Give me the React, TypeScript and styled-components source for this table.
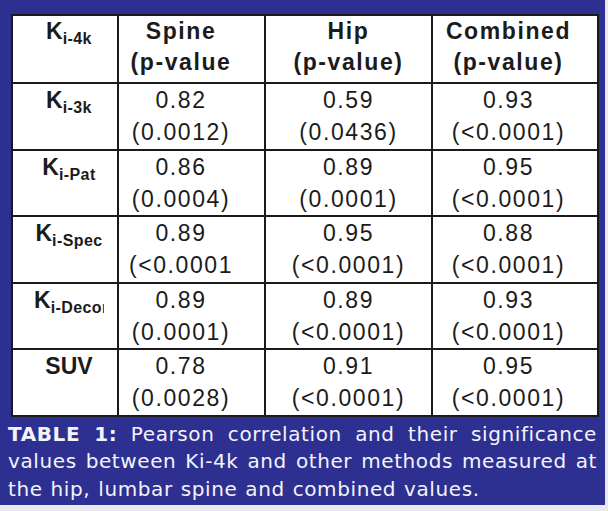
import React from "react";
import styled, { createGlobalStyle } from "styled-components";

const GlobalStyle = createGlobalStyle`
  html, body {
    margin: 0;
    padding: 0;
    background: #e9e9ef;
  }
`;

const Frame = styled.div`
  width: 605px;
  height: 505px;
  box-sizing: border-box;
  padding: 14px 8px 0 8px;
  background: #2d3091;
`;

const Table = styled.table`
  width: 586px;
  margin-left: 3px;
  border-collapse: collapse;
  table-layout: fixed;
  background: #ffffff;
  font-family: "Liberation Sans", Arial, sans-serif;
  color: #1b1b1b;
`;

const Cell = styled.td<{ $head?: boolean; $padRight?: number; $padLeft?: number }>`
  height: ${(p) => (p.$head ? 66 : 64.6)}px;
  padding: 0 ${(p) => p.$padRight || 0}px 0 ${(p) => p.$padLeft || 0}px;
  border: 2px solid #1a1a1a;
  vertical-align: top;
  text-align: center;
  font-size: 23px;
  font-weight: ${(p) => (p.$head ? 700 : 400)};
  line-height: ${(p) => (p.$head ? 31 : 32)}px;
  letter-spacing: 1.6px;
  white-space: nowrap;
  overflow: hidden;
`;

const Label = styled.div<{ $clip?: number }>`
  font-weight: 700;
  letter-spacing: 0;
  white-space: nowrap;
  overflow: hidden;
  max-width: ${(p) => (p.$clip ? `${p.$clip}px` : "none")};
  margin: 0 auto;
  text-align: ${(p) => (p.$clip ? "left" : "center")};
`;

const Sub = styled.span`
  font-size: 16px;
  letter-spacing: 0.4px;
  vertical-align: -5px;
  line-height: 0;
`;

const Caption = styled.p`
  margin: 4px 0 0 0;
  font-family: "DejaVu Sans", Verdana, sans-serif;
  font-size: 20px;
  letter-spacing: 0.6px;
  word-spacing: 1px;
  line-height: 27.5px;
  color: #f3f3fa;
  text-align: justify;
`;

const Strong = styled.b`
  font-weight: 700;
`;

type Row = {
  label: string;
  sub?: string;
  clip?: number;
  vals: [string, string][];
};

const rows: Row[] = [
  { label: "K", sub: "i-3k", vals: [["0.82", "(0.0012)"], ["0.59", "(0.0436)"], ["0.93", "(<0.0001)"]] },
  { label: "K", sub: "i-Pat", vals: [["0.86", "(0.0004)"], ["0.89", "(0.0001)"], ["0.95", "(<0.0001)"]] },
  { label: "K", sub: "i-Spec", vals: [["0.89", "(<0.0001"], ["0.95", "(<0.0001)"], ["0.88", "(<0.0001)"]] },
  { label: "K", sub: "i-Decor", clip: 70, vals: [["0.89", "(0.0001)"], ["0.89", "(<0.0001)"], ["0.93", "(<0.0001)"]] },
  { label: "SUV", vals: [["0.78", "(0.0028)"], ["0.91", "(<0.0001)"], ["0.95", "(<0.0001)"]] },
];

// right padding per value column, the source table is not quite centred
const pads = [21, 0, 13];
const heads: [string, string][] = [
  ["Spine", "(p-value"],
  ["Hip", "(p-value)"],
  ["Combined", "(p-value)"],
];

const App: React.FC = () => {
  return (
    <Frame>
      <GlobalStyle />
      <Table>
        <colgroup>
          <col style={{ width: 106 }} />
          <col style={{ width: 147 }} />
          <col style={{ width: 167 }} />
          <col style={{ width: 166 }} />
        </colgroup>
        <tbody>
          <tr>
            <Cell $head $padLeft={8}>
              <Label>
                K<Sub>i-4k</Sub>
              </Label>
            </Cell>
            {heads.map((h, i) => (
              <Cell $head key={h[0]} $padRight={pads[i]}>
                {h[0]}
                <br />
                {h[1]}
              </Cell>
            ))}
          </tr>
          {rows.map((row) => (
            <tr key={row.label + (row.sub || "")}>
              <Cell $padLeft={8}>
                <Label $clip={row.clip}>
                  {row.label}
                  {row.sub && <Sub>{row.sub}</Sub>}
                </Label>
              </Cell>
              {row.vals.map((v, i) => (
                <Cell key={i} $padRight={pads[i]}>
                  {v[0]}
                  <br />
                  {v[1]}
                </Cell>
              ))}
            </tr>
          ))}
        </tbody>
      </Table>
      <Caption>
        <Strong>TABLE 1:</Strong> Pearson correlation and their significance values between Ki-4k and other
        methods measured at the hip, lumbar spine and combined values.
      </Caption>
    </Frame>
  );
};

export default App;
